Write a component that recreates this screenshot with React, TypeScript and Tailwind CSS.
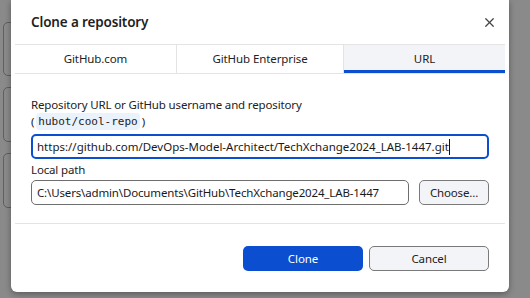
import React from 'react';
import { X } from 'lucide-react';

const font = { fontFamily: '"Noto Sans", "Open Sans", sans-serif' };

export default function App() {
  return (
    <div className="w-[530px] h-[298px] bg-[#8a8a8a] flex overflow-hidden" style={font}>
      {/* app behind the dialog */}
      <div className="w-[11px] shrink-0 flex flex-col pt-[22px] gap-[11px]">
        <div className="ml-[3px] h-[54px] w-[14px] border border-[#5f5f5f] rounded-[5px]" />
        <div className="ml-[3px] h-[55px] w-[14px] border border-[#5f5f5f] rounded-[5px]" />
        <div className="ml-[3px] h-[55px] w-[14px] border border-[#5f5f5f] rounded-[5px]" />
      </div>

      <div className="relative z-10 w-[498px] h-[292px] shrink-0 bg-white rounded-b-[6px] shadow-[0_2px_6px_rgba(0,0,0,0.35)] flex flex-col">
        <div className="h-[44px] flex items-center justify-between pl-[20px] pr-[12px]">
          <h1 className="text-[13.5px] font-semibold text-[#1f1f1f] tracking-[-0.15px]">Clone a repository</h1>
          <X className="w-[15px] h-[15px] text-[#444]" strokeWidth={2} />
        </div>

        <div className="mx-[4px] h-[30px] border-y border-[#e4e4e4] grid grid-cols-[162px_167px_1fr] text-[11.5px] tracking-[-0.1px] text-[#222]">
          <div className="flex items-center justify-center border-r border-[#e4e4e4]">GitHub.com</div>
          <div className="flex items-center justify-center border-r border-[#e4e4e4]">GitHub Enterprise</div>
          <div className="relative flex items-center justify-center bg-[#f3f4f8]">
            URL
            <span className="absolute left-0 right-0 bottom-0 h-[3px] bg-[#0b4fd0]" />
          </div>
        </div>

        <div className="px-[20px] pt-[22px] text-[11.5px] tracking-[-0.15px] text-[#222] flex flex-col whitespace-nowrap">
          <div className="leading-[17px]">Repository URL or GitHub username and repository</div>
          <div className="leading-[17px] flex items-center">
            (
            <code className="mx-[2px] px-[2px] rounded-[4px] bg-[#eaf2fc] text-[11px] tracking-normal text-[#222]" style={{ fontFamily: '"DejaVu Sans Mono", monospace' }}>
              hubot/cool-repo
            </code>
            )
          </div>
          <div className="mt-[4px] h-[25px] border-2 border-[#0b4fd0] rounded-[5px] flex items-center px-[4px] w-[458px] tracking-normal text-[#1a1a1a]">
            https://github.com/DevOps-Model-Architect/TechXchange2024_LAB-1447.git
            <span className="w-px h-[16px] bg-[#111]" />
          </div>
          <div className="leading-[17px] mt-[2px]">Local path</div>
          <div className="mt-[2px] flex gap-[10px]">
            <div className="w-[378px] h-[25px] border border-[#6e6e6e] rounded-[5px] flex items-center px-[5px] text-[#1a1a1a]">
              C:\Users\admin\Documents\GitHub\TechXchange2024_LAB-1447
            </div>
            <button className="w-[70px] h-[25px] border border-[#7a7a7a] rounded-[5px] bg-[#f3f4f7]">Choose...</button>
          </div>
        </div>

        <div className="mt-[18px] mx-[4px] border-t border-[#e4e4e4]" />

        <div className="flex justify-end gap-[6px] pr-[20px] pt-[22px] text-[11.5px] tracking-[-0.1px]">
          <button className="w-[120px] h-[25px] rounded-[5px] bg-[#0b4fd0] text-white">Clone</button>
          <button className="w-[120px] h-[25px] rounded-[5px] border border-[#7a7a7a] bg-[#f3f4f7] text-[#222]">Cancel</button>
        </div>
      </div>
    </div>
  );
}
